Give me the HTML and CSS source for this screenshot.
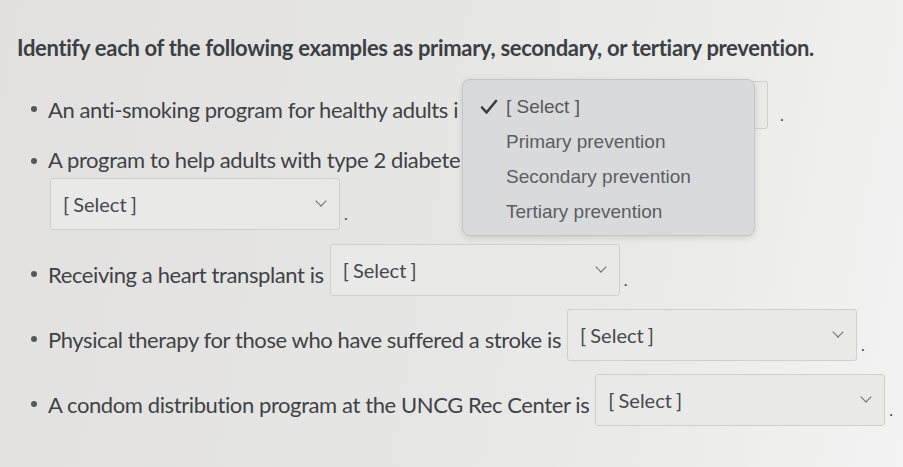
FILE: index.html
```html
<!DOCTYPE html>
<html>
<head>
<meta charset="utf-8">
<link rel="stylesheet" href="styles.css">
</head>
<body>
<div class="page">
  <h1 class="question">Identify each of the following examples as primary, secondary, or tertiary prevention.</h1>
  <ul class="items">
    <li class="item item-first">
      <span class="txt">An anti-smoking program for healthy adults i</span>
      <span class="select sel-1"><span class="chev"></span></span><span class="dot dot-1">.</span>
      <div class="popup">
        <div class="opt opt-checked"><svg class="check" width="18" height="16" viewBox="0 0 18 16"><path d="M2 8.5 L6.5 13.5 L16 2" fill="none" stroke="#3a3c40" stroke-width="2.6" stroke-linecap="round" stroke-linejoin="round"/></svg>[ Select ]</div>
        <div class="opt">Primary prevention</div>
        <div class="opt">Secondary prevention</div>
        <div class="opt">Tertiary prevention</div>
      </div>
    </li>
    <li class="item item-wrap">
      <span class="txt">A program to help adults with type 2 diabete</span>
      <div class="wrapline"><span class="select sel-2"><span class="sel-label">[ Select ]</span><span class="chev"></span></span><span class="dot">.</span></div>
    </li>
    <li class="item item-3">
      <span class="txt">Receiving a heart transplant is</span>
      <span class="select"><span class="sel-label">[ Select ]</span><span class="chev"></span></span><span class="dot">.</span>
    </li>
    <li class="item item-4">
      <span class="txt">Physical therapy for those who have suffered a stroke is</span>
      <span class="select"><span class="sel-label">[ Select ]</span><span class="chev"></span></span><span class="dot">.</span>
    </li>
    <li class="item item-5">
      <span class="txt">A condom distribution program at the UNCG Rec Center is</span>
      <span class="select"><span class="sel-label">[ Select ]</span><span class="chev"></span></span><span class="dot">.</span>
    </li>
  </ul>
</div>
</body>
</html>
```
FILE: styles.css
```css
html, body {
  margin: 0;
  padding: 0;
}
body {
  width: 903px;
  height: 467px;
  overflow: hidden;
  background: linear-gradient(100deg, #e2e1df 0%, #e5e5e3 45%, #ebebea 75%, #f3f3f3 100%);
  font-family: Lato, "Open Sans", sans-serif;
  color: #3f4247;
}
.page {
  position: relative;
  padding: 35px 0 0 17px;
}
.question {
  margin: 0;
  font-size: 22px;
  line-height: 26px;
  font-weight: 700;
  letter-spacing: -0.32px;
  color: #3c3f44;
}
.items {
  list-style: none;
  margin: 20px 0 0 0;
  padding: 0;
}
.item {
  position: relative;
  display: flex;
  align-items: center;
  font-size: 22px;
  letter-spacing: -0.4px;
  padding-left: 31px;
  margin-bottom: 13px;
  white-space: nowrap;
}
.item::before {
  content: "";
  position: absolute;
  left: 14px;
  top: 50%;
  width: 6px;
  height: 6px;
  margin-top: 1px;
  border-radius: 50%;
  background: #55585c;
}
.item-wrap {
  display: block;
  margin-top: 16px;
}
.item-wrap::before {
  top: 13px;
  margin-top: 0;
}
.item-wrap .txt {
  display: block;
  line-height: 30px;
  padding-top: 0;
}
.wrapline {
  display: flex;
  align-items: center;
  margin-top: 3px;
  margin-left: -4px;
}
.txt {
  line-height: 28px;
  padding-top: 10px;
}
.select {
  display: flex;
  align-items: center;
  justify-content: space-between;
  box-sizing: border-box;
  width: 290px;
  height: 52px;
  margin-left: 6px;
  padding: 0 14px 0 12px;
  border: 1px solid #cfcfcd;
  border-radius: 3px;
  background: #e9e9e7;
}
.sel-1 {
  justify-content: flex-end;
  margin-left: 20px;
}
.sel-label {
  font-size: 20px;
  letter-spacing: 0;
  word-spacing: -1px;
  color: #45484c;
  margin-top: 0;
}
.chev {
  width: 7px;
  height: 7px;
  border-right: 1.5px solid #6b6e72;
  border-bottom: 1.5px solid #6b6e72;
  transform: rotate(45deg);
  margin-top: -6px;
}
.dot {
  margin-left: 4px;
  margin-top: 18px;
  font-size: 16px;
}
.dot-1 {
  margin-left: 12px;
}
.item-first .select {
  height: 48px;
}
.item-3 { margin-top: 14px; }
.item-4 .select { margin-left: 6px; }
.item-5 .select { margin-left: 6px; }
.popup {
  position: absolute;
  z-index: 10;
  left: 445px;
  top: -2px;
  width: 293px;
  height: 157px;
  box-sizing: border-box;
  padding: 15px 0 0 0;
  background: #d9dadb;
  border: 1px solid #c4c5c6;
  border-radius: 8px;
  box-shadow: 0 2px 6px rgba(0,0,0,0.12);
  font-family: "Liberation Sans", Arial, sans-serif;
  letter-spacing: 0;
  font-size: 19px;
  color: #5b5e63;
}
.opt {
  height: 35px;
  line-height: 24px;
  padding-left: 43px;
  position: relative;
}
.check {
  position: absolute;
  left: 17px;
  top: 4px;
}
.opt-checked {
  color: #55585c;
}
```
